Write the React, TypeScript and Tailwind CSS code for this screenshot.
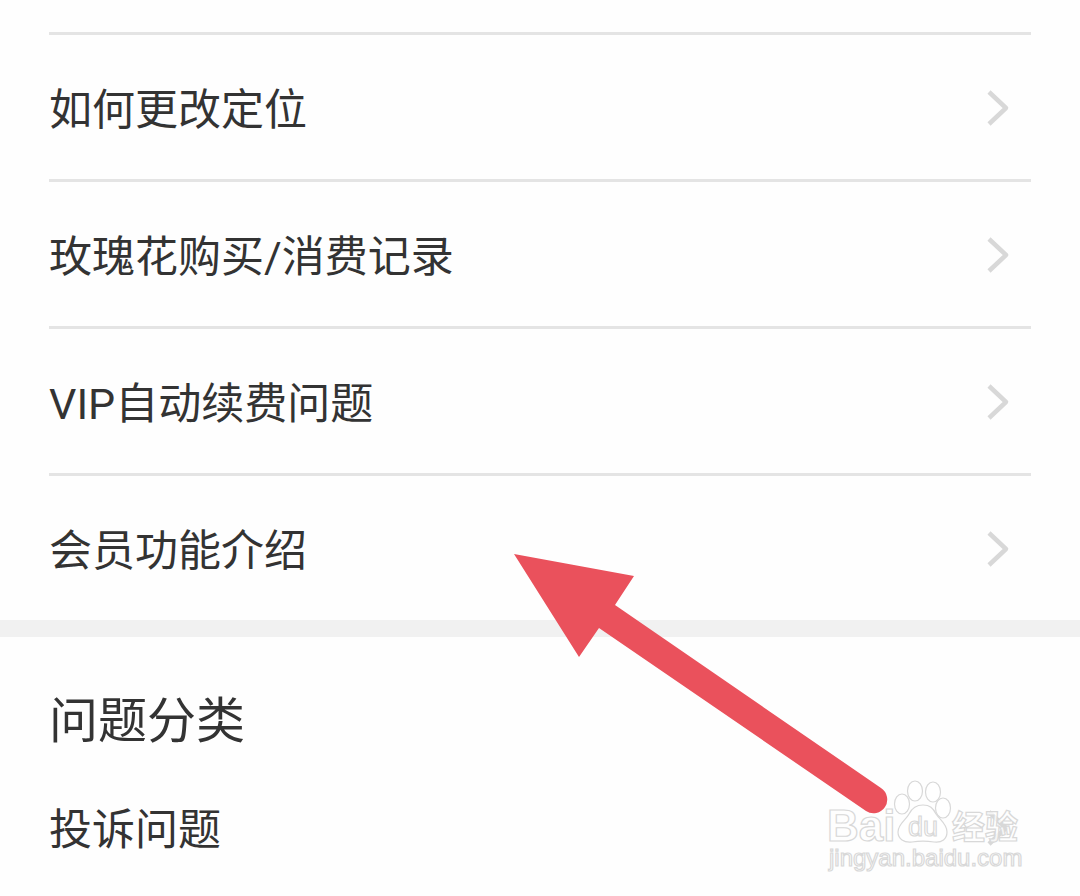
import React from 'react';

const questions = [
  '如何更改定位',
  '玫瑰花购买/消费记录',
  'VIP自动续费问题',
  '会员功能介绍',
];

const Chevron: React.FC = () => (
  <svg
    aria-hidden="true"
    viewBox="0 0 24 40"
    className="h-10 w-6 shrink-0"
    fill="none"
    stroke="#d8d8d8"
    strokeWidth="4.5"
    strokeLinejoin="round"
  >
    <path d="M3 5 L20 21 L3 37" />
  </svg>
);

const Row: React.FC<{ label: string }> = ({ label }) => (
  <button
    type="button"
    className="flex h-36 w-full items-center justify-between pr-[21px] text-left text-[43px] leading-[60px]"
  >
    <span className="pt-1.5">{label}</span>
    <Chevron />
  </button>
);

const Pointer: React.FC = () => (
  <svg
    aria-hidden="true"
    viewBox="0 0 376 262"
    className="pointer-events-none absolute top-[553px] left-[514px] h-[262px] w-[376px]"
    fill="#ea515c"
  >
    <path d="M0 1 L120 23 L101 52 L367 235 A13.6 13.6 0 0 1 352 258 L85 75 L65 104 Z" />
  </svg>
);

/**
 * Watermark: outlined Baidu Jingyan mark, drawn over the last row.
 */
const Watermark: React.FC = () => (
  <svg
    role="img"
    aria-label="Baidu 经验"
    viewBox="0 0 200 96"
    className="pointer-events-none absolute top-[778px] right-[54px] h-24 w-[200px]"
    fill="#ffffff"
    fillOpacity="0.75"
    stroke="#d8d8d8"
    strokeWidth="1.2"
  >
    <g fontFamily="'Liberation Sans', Arial, sans-serif">
      <text x="1" y="63" fontSize="44" fontWeight="700">Bai</text>
      <ellipse cx="76" cy="26" rx="7.5" ry="10" />
      <ellipse cx="89" cy="13" rx="7.5" ry="10" />
      <ellipse cx="107" cy="14" rx="7.5" ry="10" />
      <ellipse cx="117" cy="30" rx="7.5" ry="10" />
      <path d="M97 27 C90 27 86 30 83 36 C80 42 72 46 72 54 C72 61 78 65 86 64 C93 63 101 63 108 64 C116 65 121 61 121 54 C121 46 114 42 110 36 C107 30 104 27 97 27 Z" />
      <text x="82" y="58" fontSize="27">du</text>
      <text x="3" y="88" fontSize="24">jingyan.baidu.com</text>
    </g>
    <text
      x="126"
      y="61"
      fontSize="33"
      fontWeight="700"
      fontFamily="'Noto Sans CJK SC', sans-serif"
    >
      经验
    </text>
  </svg>
);

const App: React.FC = () => {
  return (
    <div className="relative overflow-hidden bg-[#fefefe] font-['Roboto','Noto_Sans_CJK_SC',sans-serif] text-[#333333]">
      <main>
        <ul className="px-[49px] pt-8">
          {questions.map((q) => (
            <li key={q} className="border-t-3 border-[#e4e4e4]">
              <Row label={q} />
            </li>
          ))}
        </ul>
        <div className="h-[17px] bg-[#f1f1f1]" />
        <section className="px-[49px] pt-[52px]">
          <h2 className="text-[49px] leading-[66px]">问题分类</h2>
          <Row label="投诉问题" />
        </section>
      </main>
      <Pointer />
      <Watermark />
    </div>
  );
};

export default App;
